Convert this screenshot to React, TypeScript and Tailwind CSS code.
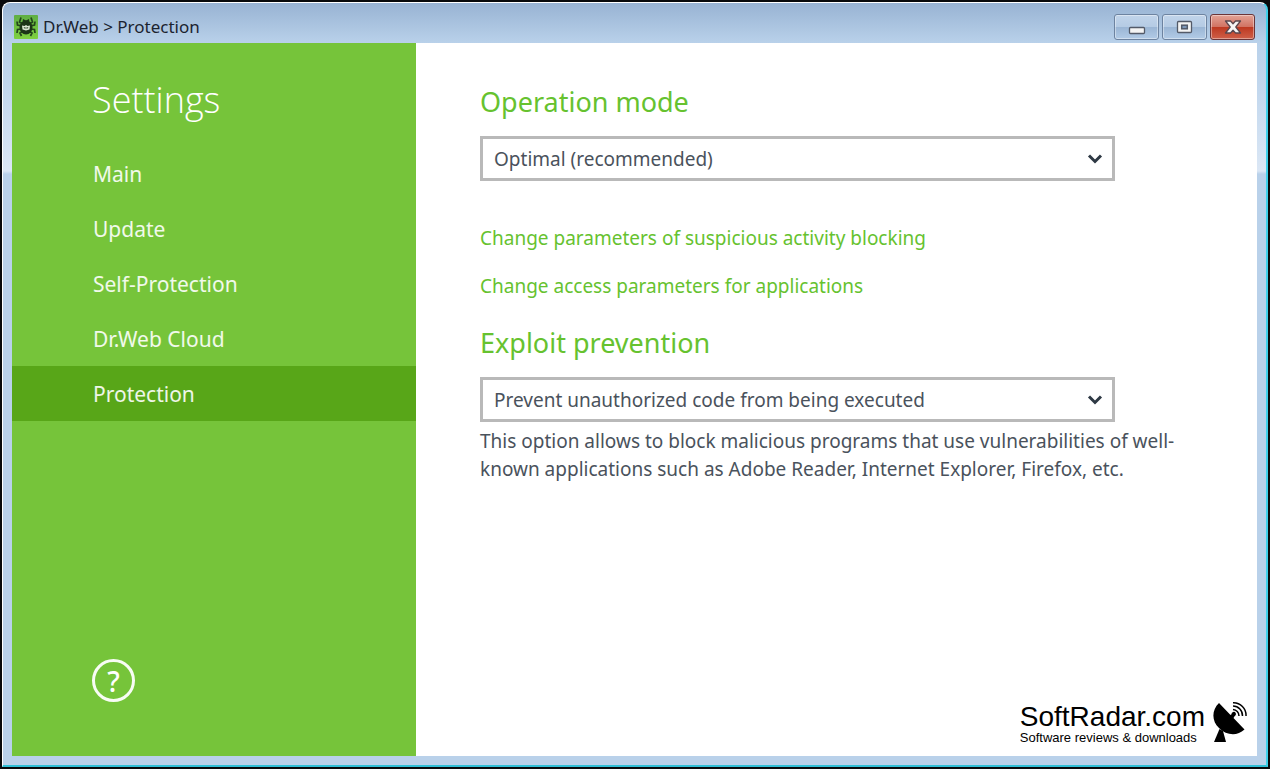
import { useState } from "react";
import type { ReactElement, ReactNode } from "react";

interface ISelectField {
  id: string;
  title: string;
  options: string[];
}

const navItems: string[] = [
  "Main",
  "Update",
  "Self-Protection",
  "Dr.Web Cloud",
  "Protection",
];

const operationMode: ISelectField = {
  id: "operation-mode",
  title: "Operation mode",
  options: ["Optimal (recommended)"],
};

const exploitPrevention: ISelectField = {
  id: "exploit-prevention",
  title: "Exploit prevention",
  options: ["Prevent unauthorized code from being executed"],
};

function SpiderLogo(): ReactElement {
  return (
    <svg className="size-6 shrink-0" viewBox="0 0 24 24" aria-hidden="true">
      <defs>
        <linearGradient id="logoBg" x1="0" y1="0" x2="0" y2="1">
          <stop offset="0" stopColor="#5fae45" />
          <stop offset="1" stopColor="#7fd13f" />
        </linearGradient>
      </defs>
      <rect width="24" height="24" rx="1" fill="url(#logoBg)" />
      <g fill="none" stroke="#24451c" strokeWidth="1.700">
        <path d="M9 9 5.500 7 7 2.500M15 9l3.500-2L17 2.500" />
        <path d="M8 11 3.500 10 3 6.500M16 11l4.500-1L21 6.500" />
        <path d="M8 14l-4.500.5L3 18M16 14l4.500.5L21 18" />
        <path d="M9 16l-3 2 1.500 3M15 16l3 2-1.500 3" />
      </g>
      <ellipse cx="12" cy="12.500" rx="6.500" ry="7" fill="#1c3517" />
      <path d="M8.500 7.500 9 4l3 1.500L15 4l.5 3.500z" fill="#1c3517" />
      <path d="M8 10.500l2.500.5 1.500-1 1.500 1 2.500-.5-.5 4-3.500 1-3.500-1z" fill="#dbe6d3" />
      <path d="M10 12l1 1.500 1-1 1 1 1-1.500" fill="none" stroke="#1c3517" strokeWidth=".8" />
    </svg>
  );
}

function RadarLogo(): ReactElement {
  return (
    <svg className="h-10 w-[34px]" viewBox="0 0 34 40" aria-hidden="true">
      <path d="M6 1C-1.500 8-1.500 19 6 26c7.500 7.500 18 8.500 25.500 1.500L20.500 16l1.200-2a2.200 2.200 0 1 0-3.200-1.800L17.500 13z" />
      <path d="M6.500 27 1 40h12L10 29z" />
      <g fill="none" stroke="#000" strokeWidth="1.500">
        <path d="M20 7.500a6.500 6.500 0 0 1 6 6.500" />
        <path d="M20 4a9.500 9.500 0 0 1 9.500 10" />
        <path d="M20 .8a12.500 12.500 0 0 1 13 13.200" />
      </g>
    </svg>
  );
}

function WindowButton(props: {
  label: string;
  close?: boolean;
  children: ReactNode;
}): ReactElement {
  const tone = props.close
    ? "border-[#6b3538] bg-[linear-gradient(#e2a396_0%,#d27464_48%,#bd3820_50%,#cf6049_100%)]"
    : "border-[#6d83a0] bg-[linear-gradient(#c1d4ea_0%,#b5cbe4_48%,#9ab5d4_50%,#b2cbe6_100%)]";
  return (
    <button
      type="button"
      aria-label={props.label}
      className={`flex h-[26px] w-[45px] items-center justify-center rounded-[3px] border shadow-[inset_0_0_0_1px_rgba(255,255,255,0.4)] ${tone}`}
    >
      {props.children}
    </button>
  );
}

function TitleBar(): ReactElement {
  return (
    <header className="flex h-10 items-center justify-between pr-[2px]">
      <div className="flex items-center gap-[5px] pt-2 pl-[2px]">
        <SpiderLogo />
        <span className="text-[17px] leading-6 text-[#1b2330]">
          Dr.Web &gt; Protection
        </span>
      </div>
      <div className="flex gap-[3px] pt-2">
        <WindowButton label="Minimize">
          <svg className="h-4 w-5" viewBox="0 0 20 16" aria-hidden="true">
            <rect x="2.500" y="8.500" width="15" height="6" rx="1" fill="#f4f4f4" stroke="#535a68" strokeWidth="1.300" />
          </svg>
        </WindowButton>
        <WindowButton label="Maximize">
          <svg className="h-4 w-5" viewBox="0 0 20 16" aria-hidden="true">
            <rect x="2.500" y="2.500" width="14" height="11" rx="1" fill="#f4f4f4" stroke="#535a68" strokeWidth="1.300" />
            <rect x="6.700" y="6.200" width="5.600" height="3.600" fill="#7d97b8" stroke="#535a68" strokeWidth="1.500" />
          </svg>
        </WindowButton>
        <WindowButton label="Close" close>
          <svg className="h-4 w-5" viewBox="0 0 20 16" aria-hidden="true">
            <path
              d="M2.500 2H7.500L10 4.800 12.500 2h5l-4.700 6 4.700 6h-5L10 11.200 7.500 14h-5l4.700-6z"
              fill="#f6f6f6"
              stroke="#5b474e"
              strokeWidth="1.300"
              strokeLinejoin="round"
            />
          </svg>
        </WindowButton>
      </div>
    </header>
  );
}

function SelectField({ field }: { field: ISelectField }): ReactElement {
  return (
    <div>
      <label
        htmlFor={field.id}
        className="block pt-[2px] text-[27px] leading-10 text-[#66c22f]"
      >
        {field.title}
      </label>
      <div className="relative mt-[14px] max-w-[635px]">
        <select
          id={field.id}
          className="h-[45px] w-full appearance-none border-[3px] border-[#b9b9b9] bg-white pt-[2px] pr-12 pl-[11px] text-[19px] text-[#4a525c]"
        >
          {field.options.map((o) => (
            <option key={o}>{o}</option>
          ))}
        </select>
        <svg
          className="pointer-events-none absolute top-[17px] right-3 h-3 w-4"
          viewBox="0 0 16 12"
          aria-hidden="true"
        >
          <path d="M2 2.500l6 6 6-6" fill="none" stroke="#2e3944" strokeWidth="3" />
        </svg>
      </div>
    </div>
  );
}

function Sidebar(): ReactElement {
  const [active, setActive] = useState<string>("Protection");

  return (
    <aside className="flex w-[404px] shrink-0 flex-col bg-[#76c43a] text-white">
      <h1 className="mt-[29px] mb-[18px] pl-20 font-['Open_Sans'] text-4xl leading-[56px] font-light">
        Settings
      </h1>
      <nav>
        {navItems.map((item) => (
          <button
            key={item}
            type="button"
            onClick={() => setActive(item)}
            className={`block h-[55px] w-full pt-[3px] pl-[81px] text-left text-[21px] text-white/90 ${
              item === active ? "bg-[#58a618]" : ""
            }`}
          >
            {item}
          </button>
        ))}
      </nav>
      <button
        type="button"
        aria-label="Help"
        className="mt-auto mb-[54px] ml-20 flex size-[43px] items-center justify-center rounded-full border-[3px] border-white/95 text-[28px] leading-none font-medium"
      >
        ?
      </button>
    </aside>
  );
}

function App(): ReactElement {
  return (
    <div className="flex min-h-screen flex-col bg-[#08090b] p-[2px] font-['Noto_Sans','Open_Sans',sans-serif]">
      <div className="flex flex-1 flex-col rounded-t-lg border-t border-r-2 border-b-2 border-l border-t-white border-r-[#3fd0ea] border-b-[#2fbfd6] border-l-white bg-[linear-gradient(#98b3d3_0px,#b9d1ea_40px,#c3d8ee_90px,#dbe7f5_168px,#b9d1ea_171px)] px-[9px] pb-[9px]">
        <TitleBar />
        <div className="flex flex-1">
          <Sidebar />
          <main className="flex flex-1 flex-col bg-white pt-[37px] pl-16 text-[#4a525c]">
            <SelectField field={operationMode} />
            <div className="mt-[33px] mb-[11px] flex flex-col items-start text-[19px] leading-[48px] text-[#66c22f]">
              <a href="#activity">Change parameters of suspicious activity blocking</a>
              <a href="#access">Change access parameters for applications</a>
            </div>
            <SelectField field={exploitPrevention} />
            <p className="mt-[5px] max-w-[700px] text-[19px] leading-7">
              This option allows to block malicious programs that use
              vulnerabilities of well-known applications such as Adobe Reader,
              Internet Explorer, Firefox, etc.
            </p>
            <div className="mt-auto mr-[10px] mb-[11px] flex items-center gap-2 self-end font-['Liberation_Sans',sans-serif] text-black">
              <div className="pt-1">
                <div className="text-[28px] leading-7">SoftRadar.com</div>
                <div className="text-[13px] leading-[14px]">
                  Software reviews &amp; downloads
                </div>
              </div>
              <RadarLogo />
            </div>
          </main>
        </div>
      </div>
    </div>
  );
}

export default App;
